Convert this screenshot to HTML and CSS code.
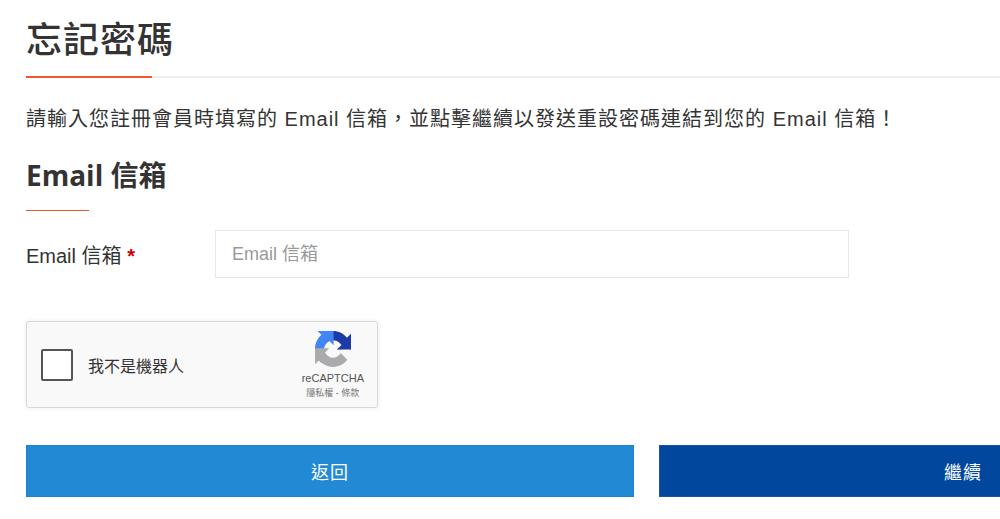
FILE: index.html
```html
<!DOCTYPE html>
<html lang="zh-Hant">
<head>
  <meta charset="UTF-8" />
  <title>忘記密碼</title>
  <link rel="stylesheet" href="styles.css">
</head>
<body>
  <div class="container">
    <h1 class="page-title">忘記密碼</h1>
    <p class="intro">請輸入您註冊會員時填寫的 Email 信箱，並點擊繼續以發送重設密碼連結到您的 Email 信箱！</p>

    <h2 class="section-title">Email 信箱</h2>
    <div class="field">
      <label for="email">Email 信箱 <span class="required">*</span></label>
      <input type="text" id="email" placeholder="Email 信箱" />
    </div>

    <div class="captcha">
      <span class="captcha-box"></span>
      <span class="captcha-label">我不是機器人</span>
      <div class="captcha-brand">
        <svg class="captcha-logo" viewBox="0 0 64 64" width="36" height="36">
          <path d="M64 31.955l-.033-1.37V4.687l-7.16 7.16C50.948 4.674 42.033.093 32.05.093c-10.4 0-19.622 4.96-25.458 12.64l11.736 11.86a15.55 15.55 0 0 1 4.754-5.334c2.05-1.6 4.952-2.906 8.968-2.906.485 0 .86.057 1.135.163 5.808.46 10.842 3.666 13.81 8.318l-8.307 8.307c10.522-.04 22.4-.066 27.295.006" fill="#1c3aa9"/>
          <path d="M31.862.001l-1.37.033H4.594l7.16 7.16C4.58 13.05 0 21.96 0 31.945c0 10.4 4.96 19.622 12.64 25.458l11.86-11.736a15.55 15.55 0 0 1-5.334-4.754c-1.6-2.05-2.906-4.952-2.906-8.968 0-.485.057-.86.163-1.135.46-5.808 3.666-10.842 8.318-13.81l8.307 8.307c-.04-10.522-.066-22.4.006-27.295" fill="#4285f4"/>
          <path d="M.002 31.947l.033 1.37v25.898l7.16-7.16c5.86 7.173 14.774 11.754 24.76 11.754 10.4 0 19.622-4.96 25.458-12.64L45.677 39.31a15.55 15.55 0 0 1-4.754 5.334c-2.05 1.6-4.952 2.906-8.968 2.906-.485 0-.86-.057-1.135-.163-5.808-.46-10.842-3.666-13.81-8.318l8.307-8.307c-10.522.04-22.4.066-27.295-.006" fill="#ababab"/>
        </svg>
        <span class="captcha-name">reCAPTCHA</span>
        <span class="captcha-links">隱私權 - 條款</span>
      </div>
    </div>

    <div class="actions">
      <button class="btn btn-back">返回</button>
      <button class="btn btn-next">繼續</button>
    </div>
  </div>
</body>
</html>
```

FILE: styles.css
```css
html, body {
  margin: 0;
  height: 519px;
  overflow: hidden;
  background: #fff;
}
body {
  font-family: "Liberation Sans", "Noto Sans CJK TC", sans-serif;
  color: #333;
}
.container {
  width: 1241px;
  margin-left: 26px;
}
.page-title {
  position: relative;
  margin: 0;
  height: 76px;
  padding-top: 16px;
  box-sizing: content-box;
  height: 60px;
  line-height: 49px;
  font-size: 36px;
  font-weight: 500;
  letter-spacing: 1px;
  border-bottom: 2px solid #eee;
}
.page-title::after {
  content: "";
  position: absolute;
  left: 0;
  bottom: -2px;
  width: 126px;
  height: 2px;
  background: #f0582a;
}
.intro {
  margin: 26px 0 0;
  font-size: 20px;
  line-height: 30px;
  letter-spacing: 1px;
  white-space: nowrap;
}
.section-title {
  margin: 22px 0 0;
  padding-bottom: 16px;
  width: 63px;
  white-space: nowrap;
  font-family: "Open Sans", "Noto Sans CJK TC", sans-serif;
  font-size: 28px;
  line-height: 38px;
  font-weight: 700;
  border-bottom: 1px solid #f0582a;
}
.field {
  display: flex;
  align-items: center;
  margin-top: 19px;
}
.field label {
  width: 189px;
  font-size: 20px;
}
.required {
  color: #c00;
  font-weight: 700;
}
.field input {
  width: 634px;
  height: 48px;
  box-sizing: border-box;
  padding: 0 16px;
  border: 1px solid #e8e8e8;
  font-family: inherit;
  font-size: 18px;
  color: #333;
  outline: none;
}
.field input::placeholder {
  color: #999;
}
.captcha {
  display: flex;
  align-items: center;
  width: 352px;
  height: 87px;
  box-sizing: border-box;
  margin-top: 43px;
  padding: 0 14px;
  background: #f9f9f9;
  border: 1px solid #d8d8d8;
  border-radius: 3px;
  box-shadow: 0 0 4px 1px rgba(0, 0, 0, 0.06);
}
.captcha-box {
  width: 32px;
  height: 32px;
  box-sizing: border-box;
  background: #fff;
  border: 2px solid #555;
  border-radius: 2px;
}
.captcha-label {
  margin-left: 15px;
  font-size: 16px;
  color: #333;
}
.captcha-brand {
  display: flex;
  flex-direction: column;
  align-items: center;
  margin-left: auto;
  margin-right: -1px;
  color: #555;
}
.captcha-logo {
  margin-top: 1px;
}
.captcha-name {
  margin-top: 5px;
  font-size: 11px;
  line-height: 13px;
}
.captcha-links {
  margin-top: 2px;
  font-size: 9px;
  line-height: 12px;
  color: #777;
}
.actions {
  display: flex;
  gap: 25px;
  margin-top: 37px;
}
.btn {
  width: 608px;
  height: 52px;
  border: 1px solid;
  font-family: inherit;
  font-size: 18px;
  color: #fff;
  letter-spacing: 1px;
}
.btn-back {
  background: #228ad4;
  border-color: #1a84d0;
}
.btn-next {
  background: #00479d;
  border-color: #1a50a5;
}
```
